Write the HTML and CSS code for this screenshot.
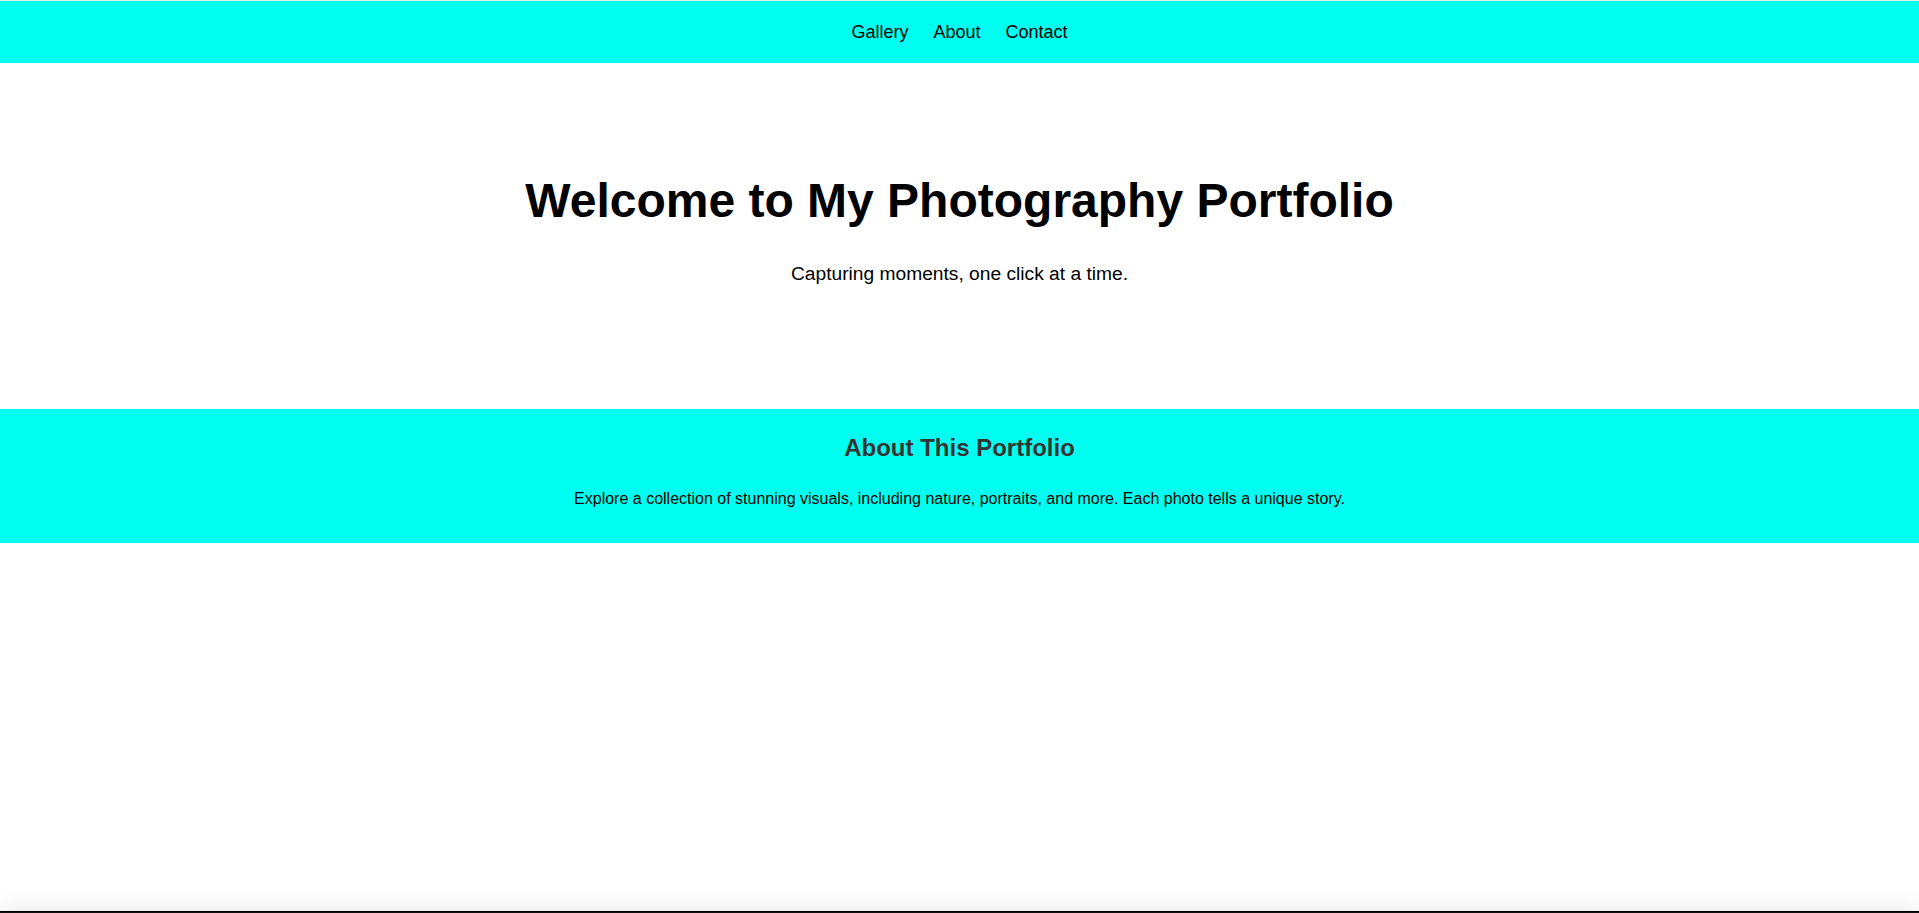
FILE: index.html
```html
<!DOCTYPE html>
<html lang="en">
<head>
<meta charset="utf-8">
<title>Photography Portfolio</title>
<link rel="stylesheet" href="styles.css">
</head>
<body>
<div class="page">
  <header class="site-header">
    <nav class="nav">
      <a href="#gallery" class="nav-link">Gallery</a>
      <a href="#about" class="nav-link">About</a>
      <a href="#contact" class="nav-link">Contact</a>
    </nav>
  </header>
  <main class="main">
    <section class="hero">
      <h1 class="hero-title">Welcome to My Photography Portfolio</h1>
      <p class="hero-sub">Capturing moments, one click at a time.</p>
    </section>
    <section class="about" id="about">
      <h2 class="about-title">About This Portfolio</h2>
      <p class="about-text">Explore a collection of stunning visuals, including nature, portraits, and more. Each photo tells a unique story.</p>
    </section>
  </main>
  <footer class="site-footer"></footer>
</div>
</body>
</html>
```

FILE: styles.css
```css
html, body {
  margin: 0;
  padding: 0;
}

body {
  font-family: "Liberation Sans", Arial, sans-serif;
  color: #000;
  background: #fff;
}

.page {
  display: flex;
  flex-direction: column;
}

.site-header {
  border-top: 1px solid #ececec;
  background: #00fff0;
}

.nav {
  display: flex;
  justify-content: center;
  gap: 25px;
  padding: 21px 20px 20px;
}

.nav-link {
  color: #000;
  text-decoration: none;
  font-size: 18px;
}

.main {
  min-height: 848px;
}

.hero {
  text-align: center;
  padding: 78px 20px 105px;
}

.hero-title {
  font-size: 48px;
  font-weight: bold;
  margin: 32px 0 35px;
}

.hero-sub {
  font-size: 19.2px;
  margin: 19.2px 0;
}

.about {
  background: #00fff0;
  text-align: center;
  padding: 25px 20px 35px;
}

.about-title {
  font-size: 24px;
  color: #333;
  margin: 0 0 28px;
}

.about-text {
  font-size: 16px;
  margin: 0;
}

.site-footer {
  background: #111;
  border-top: 1px solid #000;
  height: 40px;
  box-shadow: 0 -4px 24px rgba(0, 0, 0, 0.08);
}
```
